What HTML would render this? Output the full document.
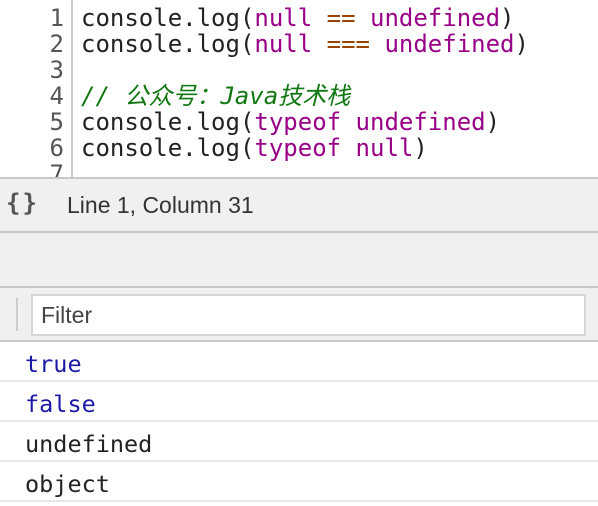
<!DOCTYPE html>
<html><head><meta charset="utf-8"><style>
*{margin:0;padding:0;box-sizing:border-box}
body{width:598px;height:504px;overflow:hidden;background:#fff;position:relative;font-family:"DejaVu Sans Mono","Liberation Mono",monospace}
.ed{position:absolute;left:0;top:0;width:598px;height:178px;overflow:hidden}
.gut{position:absolute;left:71px;top:0;width:2px;height:178px;background:#ccc}
.ln{position:absolute;left:0;width:64px;text-align:right;color:#555;font-size:24px;line-height:26px}
.cd{position:absolute;left:81px;font-size:24px;line-height:26px;color:#222;white-space:pre}
.k{color:#990088}.o{color:#994400}.c{color:#117711;font-style:italic;font-family:"DejaVu Sans Mono","Noto Sans CJK SC",monospace}
.bar{position:absolute;left:0;width:598px;background:#f0f0f0}
.st{font-family:"Liberation Sans",sans-serif;font-size:23px;color:#333;position:absolute;left:67px;top:13px}
.br{position:absolute;left:6px;top:10px;font-size:24px;font-weight:bold;color:#555;letter-spacing:2px}
.hl{position:absolute;left:0;width:598px;height:2px;background:#c8c8c8}
.in{position:absolute;left:31px;top:294px;width:555px;height:42px;background:#fff;border:2px solid #d6d6d6;font-family:"Liberation Sans",sans-serif;font-size:23px;color:#444;padding:6px 0 0 8px}
.row{position:absolute;left:0;width:598px;height:40px;border-bottom:2px solid #e8e8e8;font-size:23.5px;line-height:44px;padding-left:25px;color:#222}
.b{color:#1a1aa6}
</style></head><body>
<div class="ed">
<div class="gut"></div>
<div class="ln" style="top:5px">1<br>2<br>3<br>4<br>5<br>6<br>7</div>
<div class="cd" style="top:5px">console.log(<span class="k">null</span> <span class="o">==</span> <span class="k">undefined</span>)
console.log(<span class="k">null</span> <span class="o">===</span> <span class="k">undefined</span>)

<span class="c">// 公众号：Java技术栈</span>
console.log(<span class="k">typeof</span> <span class="k">undefined</span>)
console.log(<span class="k">typeof</span> <span class="k">null</span>)</div>
</div>
<div class="hl" style="top:177px"></div>
<div class="bar" style="top:179px;height:53px"><div class="br">{}</div><div class="st">Line 1, Column 31</div></div>
<div class="hl" style="top:231px"></div>
<div class="bar" style="top:233px;height:53px"></div>
<div class="hl" style="top:286px"></div>
<div class="bar" style="top:288px;height:52px"></div>
<div style="position:absolute;left:16px;top:298px;width:2px;height:33px;background:#ccc"></div>
<div class="in">Filter</div>
<div class="hl" style="top:340px"></div>
<div class="row b" style="top:342px">true</div>
<div class="row b" style="top:382px">false</div>
<div class="row" style="top:422px">undefined</div>
<div class="row" style="top:462px">object</div>
</body></html>
